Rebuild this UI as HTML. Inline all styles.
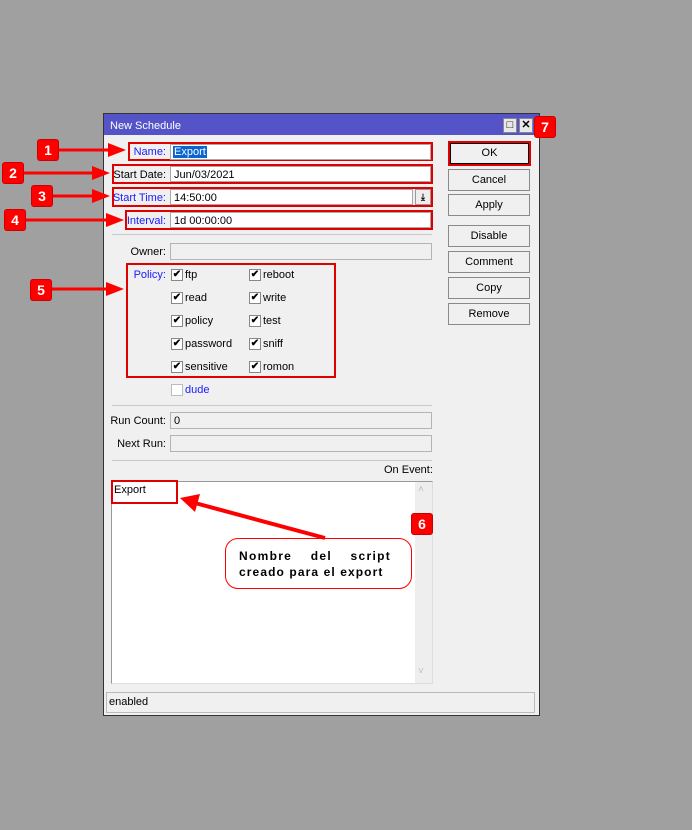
<!DOCTYPE html><html><head><style>
*{box-sizing:border-box;margin:0;padding:0}
body{width:692px;height:830px;background:#a0a0a0;position:relative;font-family:"Liberation Sans",sans-serif;font-size:11px;color:#000;overflow:hidden}
.a{position:absolute}
.win{left:103px;top:113px;width:437px;height:603px;background:#f0f0f0;border:1px solid #333}
.title{left:104px;top:114px;width:435px;height:21px;background:#5454c8;color:#fff;font-size:11px;padding:6px 0 0 6px}
.tb{width:14px;height:15px;background:#e8e8e8;border:1px solid #888;text-align:center;font-size:11px;line-height:13px;color:#000;font-weight:bold}
.red{border:2px solid #e00000}
.in{background:#fff;border:1px solid #a8a8a8;height:18px;padding:2px 3px;line-height:13px}
.dis{background:#f0f0f0;border:1px solid #b4b4b4;height:17px;padding:1px 3px;line-height:14px}
.lbl{text-align:right;line-height:14px}
.blue{color:#1a1aff}
.btn{left:448px;width:82px;height:22px;border:1px solid #8a8a8a;background:#f0f0f0;text-align:center;line-height:20px;font-size:11px}
.cb{width:12px;height:12px;background:#fff;border:1px solid #888;font-size:10px;line-height:10px;text-align:center;font-weight:bold}
.sep{height:1px;background:#c8c8c8;left:112px;width:320px}
.badge{width:20px;height:20px;background:#f00;border-radius:2px;color:#fff;font-weight:bold;font-size:14px;text-align:center;line-height:20px;box-shadow:0 0 0 1px #c00}
</style></head><body>
<div class="a win"></div>
<div class="a title">New Schedule</div>
<div class="a tb" style="left:503px;top:118px">□</div>
<div class="a tb" style="left:519px;top:118px">✕</div>

<div class="a red" style="left:128px;top:142px;width:305px;height:19px"></div>
<div class="a lbl blue" style="left:112px;top:145px;width:54px">Name:</div>
<div class="a in" style="left:170px;top:144px;width:261px;height:16px;padding:1px 2px"><span style="background:#0a64d2;color:#fff;padding:0 1px">Export </span></div>

<div class="a red" style="left:112px;top:164px;width:321px;height:20px"></div>
<div class="a lbl" style="left:112px;top:168px;width:54px">Start Date:</div>
<div class="a in" style="left:170px;top:166px;width:261px;height:16px;padding:2px 3px 0">Jun/03/2021</div>

<div class="a red" style="left:112px;top:187px;width:321px;height:20px"></div>
<div class="a lbl blue" style="left:112px;top:191px;width:54px">Start Time:</div>
<div class="a in" style="left:170px;top:189px;width:243px;height:16px;padding:2px 3px 0">14:50:00</div>
<div class="a" style="left:415px;top:189px;width:16px;height:16px;border:1px solid #999;background:#eee;text-align:center;font-size:9px;line-height:14px;font-weight:bold">⤓</div>

<div class="a red" style="left:125px;top:210px;width:308px;height:20px"></div>
<div class="a lbl blue" style="left:112px;top:214px;width:54px">Interval:</div>
<div class="a in" style="left:170px;top:212px;width:261px;height:16px;padding:2px 3px 0">1d 00:00:00</div>

<div class="a sep" style="top:234px"></div>
<div class="a lbl" style="left:112px;top:245px;width:54px">Owner:</div>
<div class="a dis" style="left:170px;top:243px;width:262px"></div>

<div class="a red" style="left:126px;top:263px;width:210px;height:115px"></div>
<div class="a lbl blue" style="left:112px;top:268px;width:54px">Policy:</div>
<div class="a cb" style="left:171px;top:269px">✔</div><div class="a" style="left:185px;top:269px">ftp</div>
<div class="a cb" style="left:249px;top:269px">✔</div><div class="a" style="left:263px;top:269px">reboot</div>
<div class="a cb" style="left:171px;top:292px">✔</div><div class="a" style="left:185px;top:292px">read</div>
<div class="a cb" style="left:249px;top:292px">✔</div><div class="a" style="left:263px;top:292px">write</div>
<div class="a cb" style="left:171px;top:315px">✔</div><div class="a" style="left:185px;top:315px">policy</div>
<div class="a cb" style="left:249px;top:315px">✔</div><div class="a" style="left:263px;top:315px">test</div>
<div class="a cb" style="left:171px;top:338px">✔</div><div class="a" style="left:185px;top:338px">password</div>
<div class="a cb" style="left:249px;top:338px">✔</div><div class="a" style="left:263px;top:338px">sniff</div>
<div class="a cb" style="left:171px;top:361px">✔</div><div class="a" style="left:185px;top:361px">sensitive</div>
<div class="a cb" style="left:249px;top:361px">✔</div><div class="a" style="left:263px;top:361px">romon</div>
<div class="a cb" style="left:171px;top:384px;border-color:#bbb"></div><div class="a blue" style="left:185px;top:384px">dude</div>

<div class="a sep" style="top:405px"></div>
<div class="a lbl" style="left:100px;top:414px;width:66px">Run Count:</div>
<div class="a dis" style="left:170px;top:412px;width:262px">0</div>
<div class="a lbl" style="left:100px;top:437px;width:66px">Next Run:</div>
<div class="a dis" style="left:170px;top:435px;width:262px"></div>
<div class="a sep" style="top:460px"></div>
<div class="a" style="left:384px;top:464px">On Event:</div>

<div class="a" style="left:111px;top:481px;width:322px;height:203px;background:#fff;border:1px solid #999;border-right-color:#ddd;border-bottom-color:#ddd"></div>
<div class="a" style="left:415px;top:482px;width:17px;height:201px;background:#eee"></div>
<div class="a" style="left:418px;top:484px;color:#bbb;font-size:10px">˄</div>
<div class="a" style="left:418px;top:666px;color:#bbb;font-size:10px">˅</div>
<div class="a" style="left:114px;top:484px">Export</div>
<div class="a red" style="left:111px;top:480px;width:67px;height:24px"></div>

<div class="a" style="left:225px;top:538px;width:187px;height:51px;background:#fff;border:1px solid #f00;border-radius:13px"></div>
<div class="a" style="left:239px;top:548px;width:152px;font-weight:bold;font-size:12px;letter-spacing:1.3px;line-height:16px;text-align:justify;text-align-last:justify">Nombre del script</div>
<div class="a" style="left:239px;top:564px;font-weight:bold;font-size:12px;letter-spacing:1.1px;line-height:16px">creado para el export</div>

<div class="a" style="left:106px;top:692px;width:429px;height:21px;border:1px solid #bbb;padding:3px 2px">enabled</div>

<div class="a btn red" style="top:141px;height:25px;line-height:21px;width:83px;border:2px solid #e00000;box-shadow:inset 0 0 0 1px #000">OK</div>
<div class="a btn" style="top:169px">Cancel</div>
<div class="a btn" style="top:194px">Apply</div>
<div class="a btn" style="top:225px">Disable</div>
<div class="a btn" style="top:251px">Comment</div>
<div class="a btn" style="top:277px">Copy</div>
<div class="a btn" style="top:303px">Remove</div>

<svg class="a" style="left:0;top:0" width="692" height="830">
<g stroke="#f00" stroke-width="3" fill="#f00">
<line x1="58" y1="150" x2="112" y2="150"/><polygon points="108,143 126,150 108,157" stroke="none"/>
<line x1="23" y1="173" x2="96" y2="173"/><polygon points="92,166 110,173 92,180" stroke="none"/>
<line x1="52" y1="196" x2="96" y2="196"/><polygon points="92,189 110,196 92,203" stroke="none"/>
<line x1="25" y1="220" x2="110" y2="220"/><polygon points="106,213 124,220 106,227" stroke="none"/>
<line x1="51" y1="289" x2="110" y2="289"/><polygon points="106,282 124,289 106,296" stroke="none"/>
<line x1="325" y1="538" x2="195" y2="503" stroke-width="4"/><polygon points="180,498 200,494 195,512" stroke="none"/>
</g></svg>
<div class="a badge" style="left:38px;top:140px">1</div>
<div class="a badge" style="left:3px;top:163px">2</div>
<div class="a badge" style="left:32px;top:186px">3</div>
<div class="a badge" style="left:5px;top:210px">4</div>
<div class="a badge" style="left:31px;top:280px">5</div>
<div class="a badge" style="left:412px;top:514px">6</div>
<div class="a badge" style="left:535px;top:117px">7</div>
</body></html>
